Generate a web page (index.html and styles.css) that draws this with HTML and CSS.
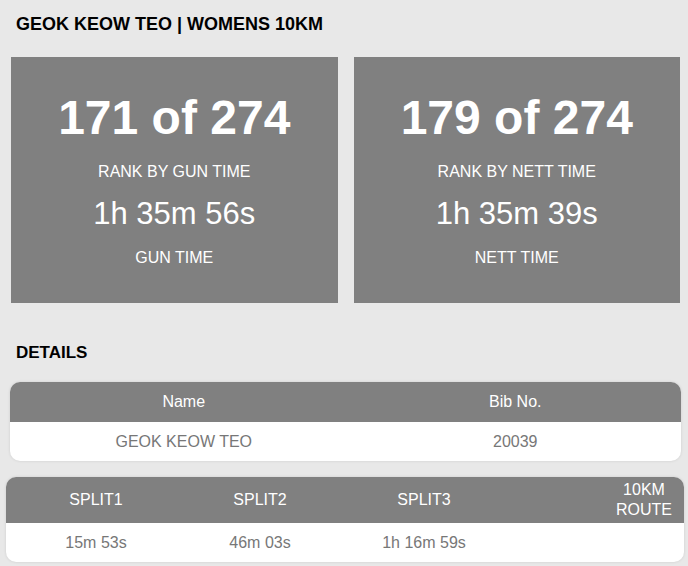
FILE: index.html
```html
<!DOCTYPE html>
<html>
<head>
<meta charset="utf-8">
<link rel="stylesheet" href="styles.css">
</head>
<body>
<div class="page">
  <h1 class="title">GEOK KEOW TEO | WOMENS 10KM</h1>
  <div class="cards">
    <div class="card">
      <div class="rank">171 of 274</div>
      <div class="label">RANK BY GUN TIME</div>
      <div class="time">1h 35m 56s</div>
      <div class="label label-last">GUN TIME</div>
    </div>
    <div class="card">
      <div class="rank">179 of 274</div>
      <div class="label">RANK BY NETT TIME</div>
      <div class="time">1h 35m 39s</div>
      <div class="label label-last">NETT TIME</div>
    </div>
  </div>
  <h2 class="section">DETAILS</h2>
  <div class="table details">
    <div class="thead row2">
      <div class="cell">Name</div>
      <div class="cell">Bib No.</div>
    </div>
    <div class="tbody row2">
      <div class="cell">GEOK KEOW TEO</div>
      <div class="cell">20039</div>
    </div>
  </div>
  <div class="table splits">
    <div class="thead row5">
      <div class="cell">SPLIT1</div>
      <div class="cell">SPLIT2</div>
      <div class="cell">SPLIT3</div>
      <div class="cell"></div>
      <div class="cell">10KM ROUTE</div>
    </div>
    <div class="tbody row5">
      <div class="cell">15m 53s</div>
      <div class="cell">46m 03s</div>
      <div class="cell">1h 16m 59s</div>
      <div class="cell"></div>
      <div class="cell"></div>
    </div>
  </div>
</div>
</body>
</html>
```

FILE: styles.css
```css
html, body {
  margin: 0;
  padding: 0;
  background: #e8e8e8;
  font-family: "Liberation Sans", Arial, sans-serif;
}
.page {
  width: 688px;
  height: 566px;
  overflow: hidden;
}
.title {
  margin: 0;
  padding: 13px 0 0 16px;
  font-size: 18px;
  line-height: 22px;
  font-weight: bold;
  color: #000;
}
.cards {
  display: flex;
  gap: 16px;
  padding: 22px 8px 0 11px;
}
.card {
  flex: 1;
  height: 246px;
  background: #808080;
  color: #fff;
  display: flex;
  flex-direction: column;
  align-items: center;
  padding-top: 33px;
  box-sizing: border-box;
}
.rank {
  font-size: 48px;
  line-height: 56px;
  font-weight: bold;
}
.label {
  font-size: 16px;
  line-height: 20px;
  margin-top: 16px;
}
.time {
  font-size: 31px;
  line-height: 36px;
  margin-top: 14px;
}
.label-last {
  margin-top: 16px;
}
.section {
  margin: 0;
  padding: 39px 0 0 16px;
  font-size: 17px;
  line-height: 22px;
  font-weight: bold;
  color: #000;
}
.table {
  background: #fff;
  border-radius: 10px;
  overflow: hidden;
  box-shadow: 0 0 3px rgba(0,0,0,0.12);
}
.details {
  margin: 18px 7px 0 10px;
}
.splits {
  margin: 16px 4px 0 6px;
}
.thead {
  background: #808080;
  color: #fff;
}
.tbody {
  color: #777;
}
.cell {
  font-size: 16px;
  line-height: 20px;
  text-align: center;
}
.row2 {
  display: grid;
  grid-template-columns: 1fr 1fr;
  padding: 0 0 0 8px;
  align-items: center;
}
.details .thead { height: 40px; }
.details .tbody { height: 39px; }
.row5 {
  display: grid;
  grid-template-columns: 164px 164px 164px 1fr 80px;
  padding-left: 8px;
  align-items: center;
}
.splits .thead { height: 46px; }
.splits .tbody { height: 39px; }
```
